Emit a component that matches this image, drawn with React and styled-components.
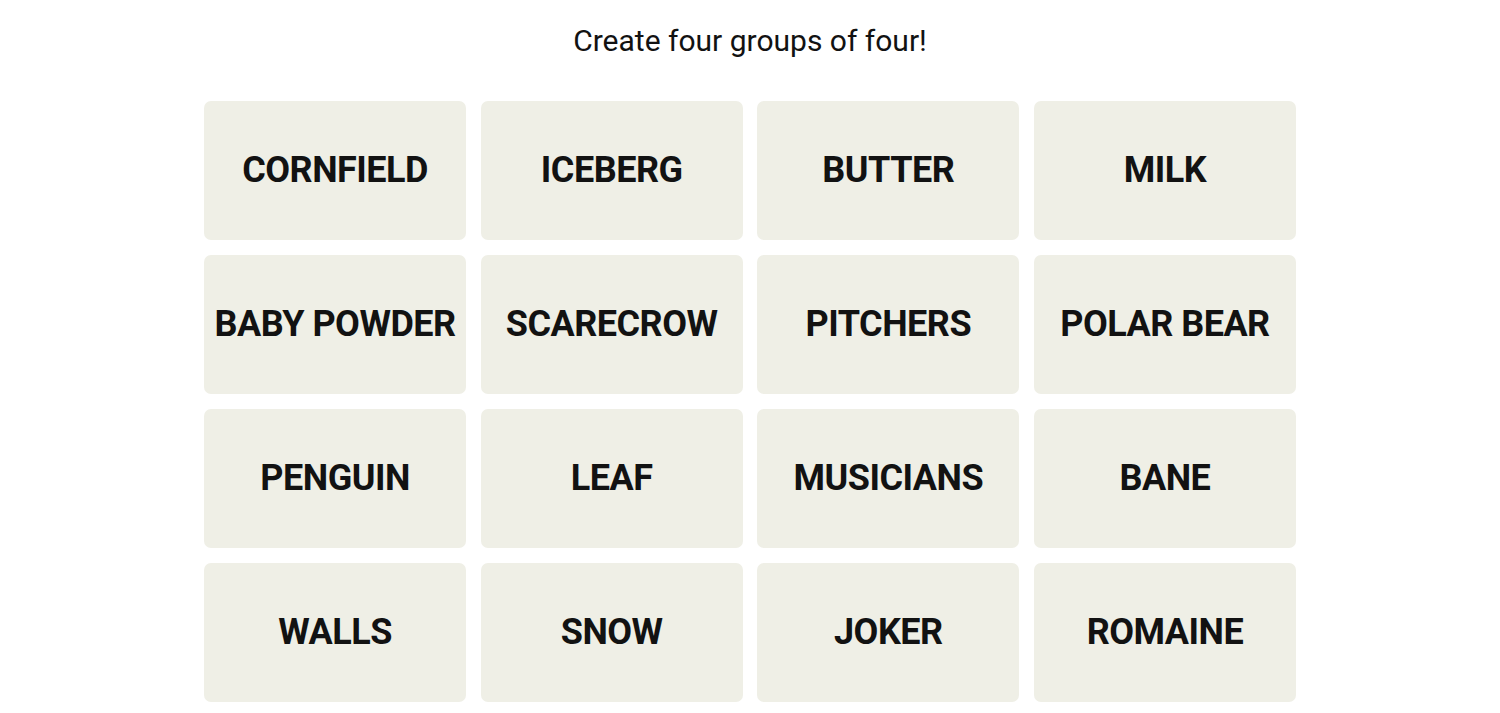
import React from 'react';
import styled, { createGlobalStyle } from 'styled-components';

const GlobalStyle = createGlobalStyle`
body {
margin: 0;
background: #ffffff;
font-family: Roboto, "Liberation Sans", sans-serif;
}
`;

const Page = styled.main`
display: flex;
flex-direction: column;
align-items: center;
padding-top: 21px;
`;

const Title = styled.h2`
margin: 0 0 40px 0;
font-size: 30px;
line-height: 40px;
font-weight: 400;
color: #121212;
letter-spacing: 0;
`;

const Board = styled.div`
width: 1092px;
display: grid;
grid-template-columns: repeat(4, 1fr);
grid-auto-rows: 139px;
gap: 15px 14.5px;
`;

const Tile = styled.button`
border: none;
border-radius: 7px;
background-color: #efefe6;
display: flex;
align-items: center;
justify-content: center;
font-family: Roboto, "Liberation Sans", sans-serif;
font-size: 36px;
font-weight: 700;
color: #121212;
text-transform: uppercase;
letter-spacing: -0.5px;
cursor: pointer;
padding: 0 0 2px 0;
`;

const words = [
  'Cornfield', 'Iceberg', 'Butter', 'Milk',
  'Baby Powder', 'Scarecrow', 'Pitchers', 'Polar Bear',
  'Penguin', 'Leaf', 'Musicians', 'Bane',
  'Walls', 'Snow', 'Joker', 'Romaine',
];

function App() {
  return (
    <Page>
      <GlobalStyle />
      <Title>Create four groups of four!</Title>
      <Board>
        {words.map((word) => (
          <Tile key={word}>{word}</Tile>
        ))}
      </Board>
    </Page>
  );
}

export default App;
